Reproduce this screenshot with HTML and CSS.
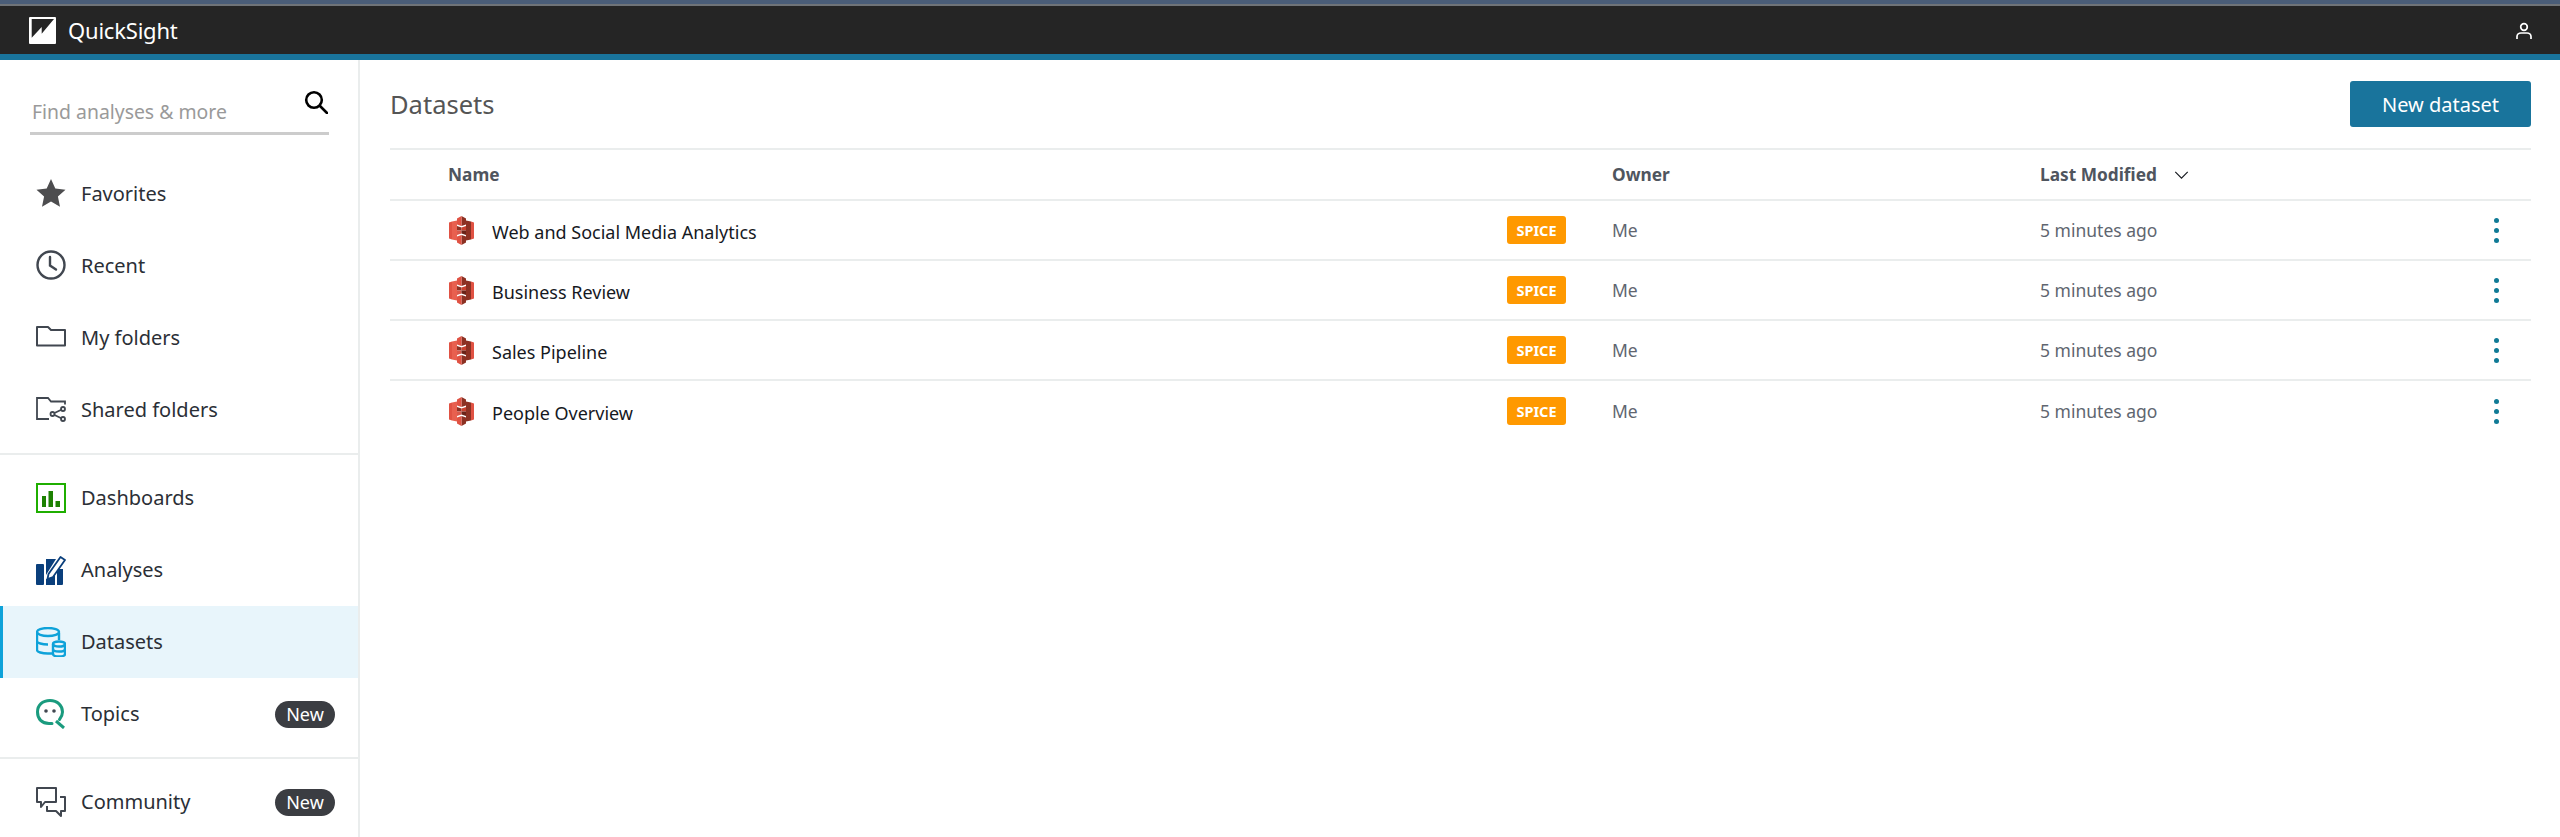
FILE: index.html
```html
<!DOCTYPE html>
<html lang="en">
<head>
<meta charset="utf-8">
<title>QuickSight Datasets</title>
<link rel="stylesheet" href="styles.css">
</head>
<body>
<svg class="defs" width="0" height="0" aria-hidden="true">
  <symbol id="s3" viewBox="0 0 25 29">
    <path d="M0 6.500l3-1v18l-3-1z" fill="#e05243"/>
    <path d="M3 5.500l5-1v20l-5-1z" fill="#e8604f"/>
    <path d="M25 6.500l-3-1v18l3-1z" fill="#e05243"/>
    <path d="M22 5.500l-5-1v20l5-1z" fill="#8c3123"/>
    <path d="M12.500 0L17 2.500v6l-4.500 1.500z" fill="#8c3123"/>
    <path d="M12.500 0L8 2.500v6l4.500 1.500z" fill="#e05243"/>
    <path d="M12.500 29L17 26.500v-6L12.500 19z" fill="#8c3123"/>
    <path d="M12.500 29L8 26.500v-6l4.500-1.500z" fill="#e05243"/>
    <path d="M8 10l4.500 1.500v3H8z" fill="#8c3123"/>
    <path d="M17 10l-4.500 1.500v3H17z" fill="#c8412f"/>
    <path d="M8 14.500h4.500v3L8 19z" fill="#d9584a"/>
    <path d="M17 14.500h-4.500v3L17 19z" fill="#6b2419"/>
  </symbol>
</svg>
<div class="strip"></div>
<header class="topbar">
  <div class="brand">
    <svg class="logo" viewBox="0 0 27 27"><rect width="27" height="27" rx="1" fill="#fff"/><path d="M2.700 2H25L12.700 16.700V10L2.700 20.700z" fill="#252525"/></svg>
    <span class="brand-name">QuickSight</span>
  </div>
  <svg class="user" viewBox="0 0 16 17" fill="none" stroke="#fff" stroke-width="1.700"><circle cx="8" cy="5" r="3.300"/><path d="M1 17v-2.500C1 12.500 3 11 5 11h6c2 0 4 1.500 4 3.500V17"/></svg>
</header>
<div class="layout">
  <aside class="sidebar">
    <div class="search">
      <span class="search-text">Find analyses &amp; more</span>
      <svg class="search-icon" viewBox="0 0 24 24" fill="none" stroke="#000" stroke-width="2.600" stroke-linecap="round"><circle cx="10" cy="10" r="7.800"/><path d="M16 16l7 7"/></svg>
    </div>
    <nav class="nav-group nav-first">
      <a class="nav-item"><svg class="nav-icon" viewBox="0 0 30 30"><path d="M15 1l4.300 9.500 10.200 1.200-7.600 6.900 2.100 10.200L15 23.600 6 28.800l2.100-10.200L.5 11.700l10.200-1.200z" fill="#4d4d4f"/></svg><span>Favorites</span></a>
      <a class="nav-item"><svg class="nav-icon" viewBox="0 0 30 30" fill="none" stroke="#414750" stroke-width="2.400"><circle cx="15" cy="15" r="13.500"/><path d="M14 7v8.500l6 4" stroke-linecap="round"/></svg><span>Recent</span></a>
      <a class="nav-item"><svg class="nav-icon" viewBox="0 0 30 30" fill="none" stroke="#414750" stroke-width="2"><path d="M1 5h11l3 3h14v15.500H1z" stroke-linejoin="round"/></svg><span>My folders</span></a>
      <a class="nav-item"><svg class="nav-icon" viewBox="0 0 30 30" fill="none" stroke="#414750" stroke-width="1.800"><path d="M13 25H1V4h11l3 3.500h14v3"/><circle cx="27" cy="15" r="2"/><circle cx="27" cy="25" r="2"/><circle cx="16.500" cy="20" r="2"/><path d="M18.500 19l6.800-3.300M18.500 21l6.800 3.300"/></svg><span>Shared folders</span></a>
    </nav>
    <nav class="nav-group nav-lower">
      <a class="nav-item"><svg class="nav-icon" viewBox="0 0 30 30"><rect x="1" y="1" width="28" height="28" fill="#fff" stroke="#1fae00" stroke-width="2"/><rect x="6" y="13" width="4" height="11" fill="#1d8102"/><rect x="12.500" y="8" width="4.500" height="16" fill="#1d8102"/><rect x="19.500" y="18" width="4.500" height="6" fill="#1d8102"/></svg><span>Dashboards</span></a>
      <a class="nav-item"><svg class="nav-icon" viewBox="0 0 30 30"><rect x="0" y="9" width="8" height="21" rx="1" fill="#0a3f7c"/><path d="M10 30V4h10L10 20z" fill="#0a3f7c"/><path d="M10 30v-6l4-1 5-4v11zM21 30V14h6v15a1 1 0 0 1-1 1z" fill="#0a3f7c"/><path d="M11.500 24l1-5L24.500 2 29 5 17 22z" fill="#fff" stroke="#0a3f7c" stroke-width="1.800" stroke-linejoin="round"/></svg><span>Analyses</span></a>
      <a class="nav-item nav-active"><svg class="nav-icon" viewBox="0 0 30 30" fill="none" stroke="#0ea2d9" stroke-width="2.400"><ellipse cx="12" cy="5" rx="11" ry="4"/><path d="M23 6v7M1 5v18c0 2 5 3.500 11 3.500h4M1 14c0 2 5 3.500 11 3.500"/><ellipse cx="23" cy="17" rx="6" ry="2.500"/><path d="M17 17v10c0 1.600 2.700 2.500 6 2.500s6-.9 6-2.500V17M17 22c0 1.600 2.700 2.500 6 2.500s6-.9 6-2.500"/></svg><span>Datasets</span></a>
      <a class="nav-item"><svg class="nav-icon" viewBox="0 0 30 30" fill="none" stroke="#1a9b7e" stroke-width="3"><path d="M16 24.500H13C6 24.500 1.500 20 1.500 13S6.500 1.500 14 1.500 26.500 6.500 26.500 13c0 3-1 5-3 7.500" stroke-linecap="round"/><path d="M20 22l8 7"/><circle cx="10" cy="12" r="1.800" fill="#414750" stroke="none"/><circle cx="18" cy="12" r="1.800" fill="#414750" stroke="none"/></svg><span>Topics</span><em class="pill">New</em></a>
    </nav>
    <nav class="nav-group nav-lower">
      <a class="nav-item"><svg class="nav-icon" viewBox="0 0 30 30" fill="none" stroke="#414750" stroke-width="2" stroke-linejoin="round"><path d="M1 1h19v14H9l-4 5v-5H1z"/><path d="M24 10h5v14h-4v5l-5-5h-9v-5"/></svg><span>Community</span><em class="pill">New</em></a>
    </nav>
  </aside>
  <main class="content">
    <div class="page-head">
      <h1 class="page-title">Datasets</h1>
      <button class="primary">New dataset</button>
    </div>
    <div class="table">
      <div class="row head">
        <div class="col-name">Name</div>
        <div class="col-owner">Owner</div>
        <div class="col-date">Last Modified <svg class="chev" viewBox="0 0 16 9" fill="none" stroke="#16191f" stroke-width="1.300"><path d="M1 1l7 7 7-7"/></svg></div>
      </div>
      <div class="row">
        <div class="col-name"><svg class="s3"><use href="#s3"/></svg><span class="ds-name">Web and Social Media Analytics</span></div>
        <div class="col-tag"><span class="spice">SPICE</span></div>
        <div class="col-owner">Me</div>
        <div class="col-date">5 minutes ago</div>
        <div class="col-more"><i></i><i></i><i></i></div>
      </div>
      <div class="row">
        <div class="col-name"><svg class="s3"><use href="#s3"/></svg><span class="ds-name">Business Review</span></div>
        <div class="col-tag"><span class="spice">SPICE</span></div>
        <div class="col-owner">Me</div>
        <div class="col-date">5 minutes ago</div>
        <div class="col-more"><i></i><i></i><i></i></div>
      </div>
      <div class="row">
        <div class="col-name"><svg class="s3"><use href="#s3"/></svg><span class="ds-name">Sales Pipeline</span></div>
        <div class="col-tag"><span class="spice">SPICE</span></div>
        <div class="col-owner">Me</div>
        <div class="col-date">5 minutes ago</div>
        <div class="col-more"><i></i><i></i><i></i></div>
      </div>
      <div class="row last">
        <div class="col-name"><svg class="s3"><use href="#s3"/></svg><span class="ds-name">People Overview</span></div>
        <div class="col-tag"><span class="spice">SPICE</span></div>
        <div class="col-owner">Me</div>
        <div class="col-date">5 minutes ago</div>
        <div class="col-more"><i></i><i></i><i></i></div>
      </div>
    </div>
  </main>
</div>
</body>
</html>
```
FILE: styles.css
```css
* { box-sizing: border-box; }
html, body { margin: 0; height: 837px; overflow: hidden; background: #fff; }
body { font-family: "Noto Sans", "Open Sans", sans-serif; color: #16191f; }
.defs { position: absolute; }

.strip { height: 6px; background: #4a5d78; border-bottom: 2px solid #6f7378; }
.topbar {
  height: 54px; background: #252525; border-bottom: 6px solid #19749c;
  display: flex; align-items: center; justify-content: space-between;
  padding: 0 28px 0 29px;
}
.brand { display: flex; align-items: center; gap: 12px; }
.logo { width: 27px; height: 27px; display: block; }
.brand-name { color: #fff; font-size: 22px; letter-spacing: -0.2px; }
.user { width: 16px; height: 17px; display: block; }

.layout { display: flex; height: 777px; }
.sidebar { width: 360px; flex: none; border-right: 2px solid #eaeded; }
.search {
  margin: 29px 30px 0 30px; width: 299px; height: 46px;
  border-bottom: 3px solid #ccc;
  display: flex; justify-content: space-between; align-items: flex-start;
}
.search-text { color: #9a9a9a; font-size: 19.400px; margin-top: 9px; margin-left: 2px; }
.search-icon { width: 24px; height: 24px; margin-top: 1px; margin-right: 1px; }

.nav-group { border-top: 2px solid #eaeded; padding: 7px 0; }
.nav-first { border-top: 0; padding: 22px 0 8px; }
.nav-item {
  display: flex; align-items: center; height: 72px;
  padding: 0 23px 0 36px; font-size: 20px; color: #2b2f36;
}
.nav-lower .nav-item span { margin-top: -2px; }
.nav-icon { width: 30px; height: 30px; flex: none; margin-right: 15px; display: block; }
.nav-active { background: #e8f5fb; border-left: 3px solid #0ea2d9; padding-left: 33px; }
.pill {
  margin-left: auto; font-style: normal; background: #3b3d42; color: #fff;
  font-size: 18px; line-height: 26px; height: 27px; width: 60px; text-align: center; border-radius: 14px;
}

.content { flex: 1; padding: 21px 29px 0 30px; }
.page-head { display: flex; justify-content: space-between; align-items: center; height: 46px; margin-bottom: 21px; }
.page-title { margin: 0; font-size: 25.500px; font-weight: 400; color: #555; }
.primary {
  width: 181px; height: 46px; background: #19749c; border: 0; border-radius: 3px;
  color: #fff; font: 400 20px "Noto Sans", sans-serif;
}

.table { border-top: 2px solid #eaeded; }
.row {
  display: grid; grid-template-columns: 1117px 105px 428px 1fr 38px;
  height: 60px; align-items: center; border-bottom: 2px solid #eaeded;
  font-size: 17.500px; color: #5f6670;
}
.row.last { border-bottom: 0; }
.head { height: 51px; font-weight: 700; font-size: 17.300px; color: #4f555e; }
.head .col-name { grid-column: 1 / 3; }
.head .col-date { grid-column: 4; }
.col-name { display: flex; align-items: center; padding-left: 58px; }
.s3 { width: 25px; height: 29px; flex: none; margin-left: 1px; }
.ds-name { margin-left: 18px; color: #16191f; margin-top: 3px; font-size: 18px; }
.col-tag { padding-left: 0; }
.spice {
  display: block; width: 59px; height: 28px; line-height: 28px; text-align: center;
  background: #ff9900; color: #fff; font-size: 14.500px; font-weight: 700; border-radius: 3px;
}
.col-date { display: flex; align-items: center; white-space: pre; }
.chev { width: 15px; height: 8px; margin-left: 13px; }
.col-more { display: flex; flex-direction: column; align-items: center; gap: 5px; width: 6px; }
.col-more i { width: 5px; height: 5px; border-radius: 50%; background: #0f7a96; display: block; }
```
